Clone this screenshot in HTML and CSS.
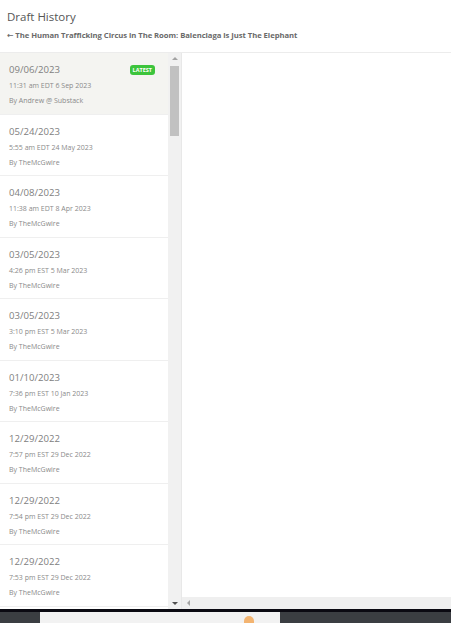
FILE: index.html
```html
<!DOCTYPE html>
<html lang="en">
<head>
  <meta charset="UTF-8" />
  <title>Draft History</title>
  <link rel="stylesheet" href="styles.css">
</head>
<body>
  <div class="page">
    <header class="header">
      <h1 class="title">Draft History</h1>
      <div class="back">&larr; The Human Trafficking Circus in The Room: Balenciaga is Just The Elephant</div>
    </header>
    <div class="main">
      <ul class="list">
        <li class="item active">
          <div class="row"><span class="date">09/06/2023</span><span class="badge">LATEST</span></div>
          <div class="meta">11:31 am EDT 6 Sep 2023</div>
          <div class="meta">By Andrew @ Substack</div>
        </li>
        <li class="item">
          <div class="row"><span class="date">05/24/2023</span></div>
          <div class="meta">5:55 am EDT 24 May 2023</div>
          <div class="meta">By TheMcGwire</div>
        </li>
        <li class="item">
          <div class="row"><span class="date">04/08/2023</span></div>
          <div class="meta">11:38 am EDT 8 Apr 2023</div>
          <div class="meta">By TheMcGwire</div>
        </li>
        <li class="item">
          <div class="row"><span class="date">03/05/2023</span></div>
          <div class="meta">4:26 pm EST 5 Mar 2023</div>
          <div class="meta">By TheMcGwire</div>
        </li>
        <li class="item">
          <div class="row"><span class="date">03/05/2023</span></div>
          <div class="meta">3:10 pm EST 5 Mar 2023</div>
          <div class="meta">By TheMcGwire</div>
        </li>
        <li class="item">
          <div class="row"><span class="date">01/10/2023</span></div>
          <div class="meta">7:36 pm EST 10 Jan 2023</div>
          <div class="meta">By TheMcGwire</div>
        </li>
        <li class="item">
          <div class="row"><span class="date">12/29/2022</span></div>
          <div class="meta">7:57 pm EST 29 Dec 2022</div>
          <div class="meta">By TheMcGwire</div>
        </li>
        <li class="item">
          <div class="row"><span class="date">12/29/2022</span></div>
          <div class="meta">7:54 pm EST 29 Dec 2022</div>
          <div class="meta">By TheMcGwire</div>
        </li>
        <li class="item">
          <div class="row"><span class="date">12/29/2022</span></div>
          <div class="meta">7:53 pm EST 29 Dec 2022</div>
          <div class="meta">By TheMcGwire</div>
        </li>
      </ul>
      <div class="vscroll">
        <span class="arrow up"></span>
        <span class="thumb"></span>
        <span class="arrow down"></span>
      </div>
      <div class="pane">
        <div class="pane-body"></div>
        <div class="hscroll"><span class="arrow left"></span></div>
      </div>
    </div>
    <div class="taskbar">
      <div class="taskbar-edge"></div>
      <div class="taskbar-body">
        <div class="tab"><span class="tab-dot"></span></div>
      </div>
    </div>
  </div>
</body>
</html>
```

FILE: styles.css
```css
html, body { margin: 0; padding: 0; background: #fff; }
body { font-family: "Open Sans", "DejaVu Sans", sans-serif; color: #777; }
.page { width: 451px; height: 623px; overflow: hidden; display: flex; flex-direction: column; }

.header { height: 52px; padding: 8px 0 0 7px; box-sizing: border-box; }
.title { margin: 0; font-size: 11.5px; font-weight: 400; color: #555; line-height: 17px; }
.back { margin-top: 5px; font-size: 7.7px; font-weight: 700; color: #6a6a6a; line-height: 10px; letter-spacing: -0.05px; }

.main { flex: 1; display: flex; border-top: 1px solid #ececec; min-height: 0; }

.list { list-style: none; margin: 0; padding: 0; width: 168px; overflow: hidden; }
.item { border-bottom: 1px solid #efefef; padding: 9px 0 0 9px; height: 51.5px; }
.item.active { background: #f4f4f1; }
.row { display: flex; align-items: center; justify-content: space-between; padding-right: 13px; height: 15px; }
.date { font-size: 9.6px; color: #808080; }
.badge { background: #3cc43c; color: #fff; font-size: 5.5px; font-weight: 700; padding: 1px 3px; border-radius: 3px; line-height: 8px; }
.meta { font-size: 7px; color: #8a8a8a; line-height: 9px; margin-top: 6px; }
.row + .meta { margin-top: 4px; }

.vscroll { width: 13px; background: #f1f1f1; display: flex; flex-direction: column; align-items: center; }
.thumb { width: 9px; height: 70px; background: #c1c1c1; margin-top: 1px; }
.arrow { width: 0; height: 0; border: 3px solid transparent; }
.arrow.up { border-bottom: 3px solid #a3a3a3; border-top: 0; margin-top: 4px; margin-bottom: 5px; }
.arrow.down { border-top: 3px solid #505050; border-bottom: 0; margin-top: auto; margin-bottom: 4px; }
.arrow.left { border-right: 3px solid #a3a3a3; border-left: 0; margin-left: 5px; }

.pane { flex: 1; display: flex; flex-direction: column; border-left: 1px solid #e8e8e8; }
.pane-body { flex: 1; }
.hscroll { height: 12px; background: #efefef; display: flex; align-items: center; }

.taskbar { height: 14px; display: flex; flex-direction: column; }
.taskbar-edge { height: 3px; background: #0b0a12; }
.taskbar-body { flex: 1; background: #3b3e42; padding-left: 40px; }
.tab { width: 240px; height: 100%; background: #f2f2f2; position: relative; }
.tab-dot { position: absolute; left: 204px; top: 4px; width: 10px; height: 7px; border-radius: 5px 5px 0 0; background: #f39a3a; opacity: 0.7; }
```
